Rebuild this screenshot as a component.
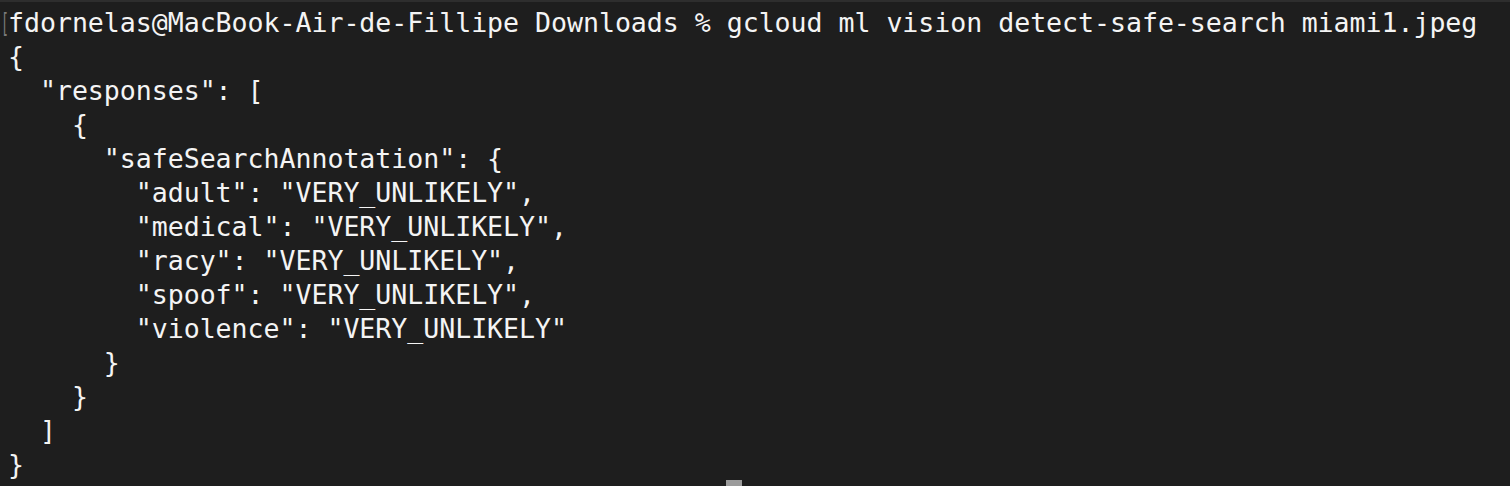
import React from "react";

const lines = [
  "fdornelas@MacBook-Air-de-Fillipe Downloads % gcloud ml vision detect-safe-search miami1.jpeg",
  "{",
  '  "responses": [',
  "    {",
  '      "safeSearchAnnotation": {',
  '        "adult": "VERY_UNLIKELY",',
  '        "medical": "VERY_UNLIKELY",',
  '        "racy": "VERY_UNLIKELY",',
  '        "spoof": "VERY_UNLIKELY",',
  '        "violence": "VERY_UNLIKELY"',
  "      }",
  "    }",
  "  ]",
  "}",
];

export default function App() {
  return (
    <div className="relative w-[1510px] h-[486px] overflow-hidden bg-[#1e1e1e]">
      <div className="h-[2px] bg-[#2e2e2e]" />
      <div className="relative pt-[4px] pl-[8px] font-['DejaVu_Sans_Mono',monospace] text-[26.6px] tracking-[-0.04px] leading-[34px] text-[#f4f4f4] whitespace-pre">
        <span className="absolute left-[1px] top-[4px] text-[#7a7a7a] font-['DejaVu_Sans_Mono',monospace] text-[26px] leading-[34px] scale-x-50 origin-left">[</span>
        {lines.map((l, i) => (
          <div key={i}>{l}</div>
        ))}
      </div>
      <div className="absolute left-[726px] top-[480px] w-[16px] h-[8px] bg-[#9b9b9b]" />
    </div>
  );
}
